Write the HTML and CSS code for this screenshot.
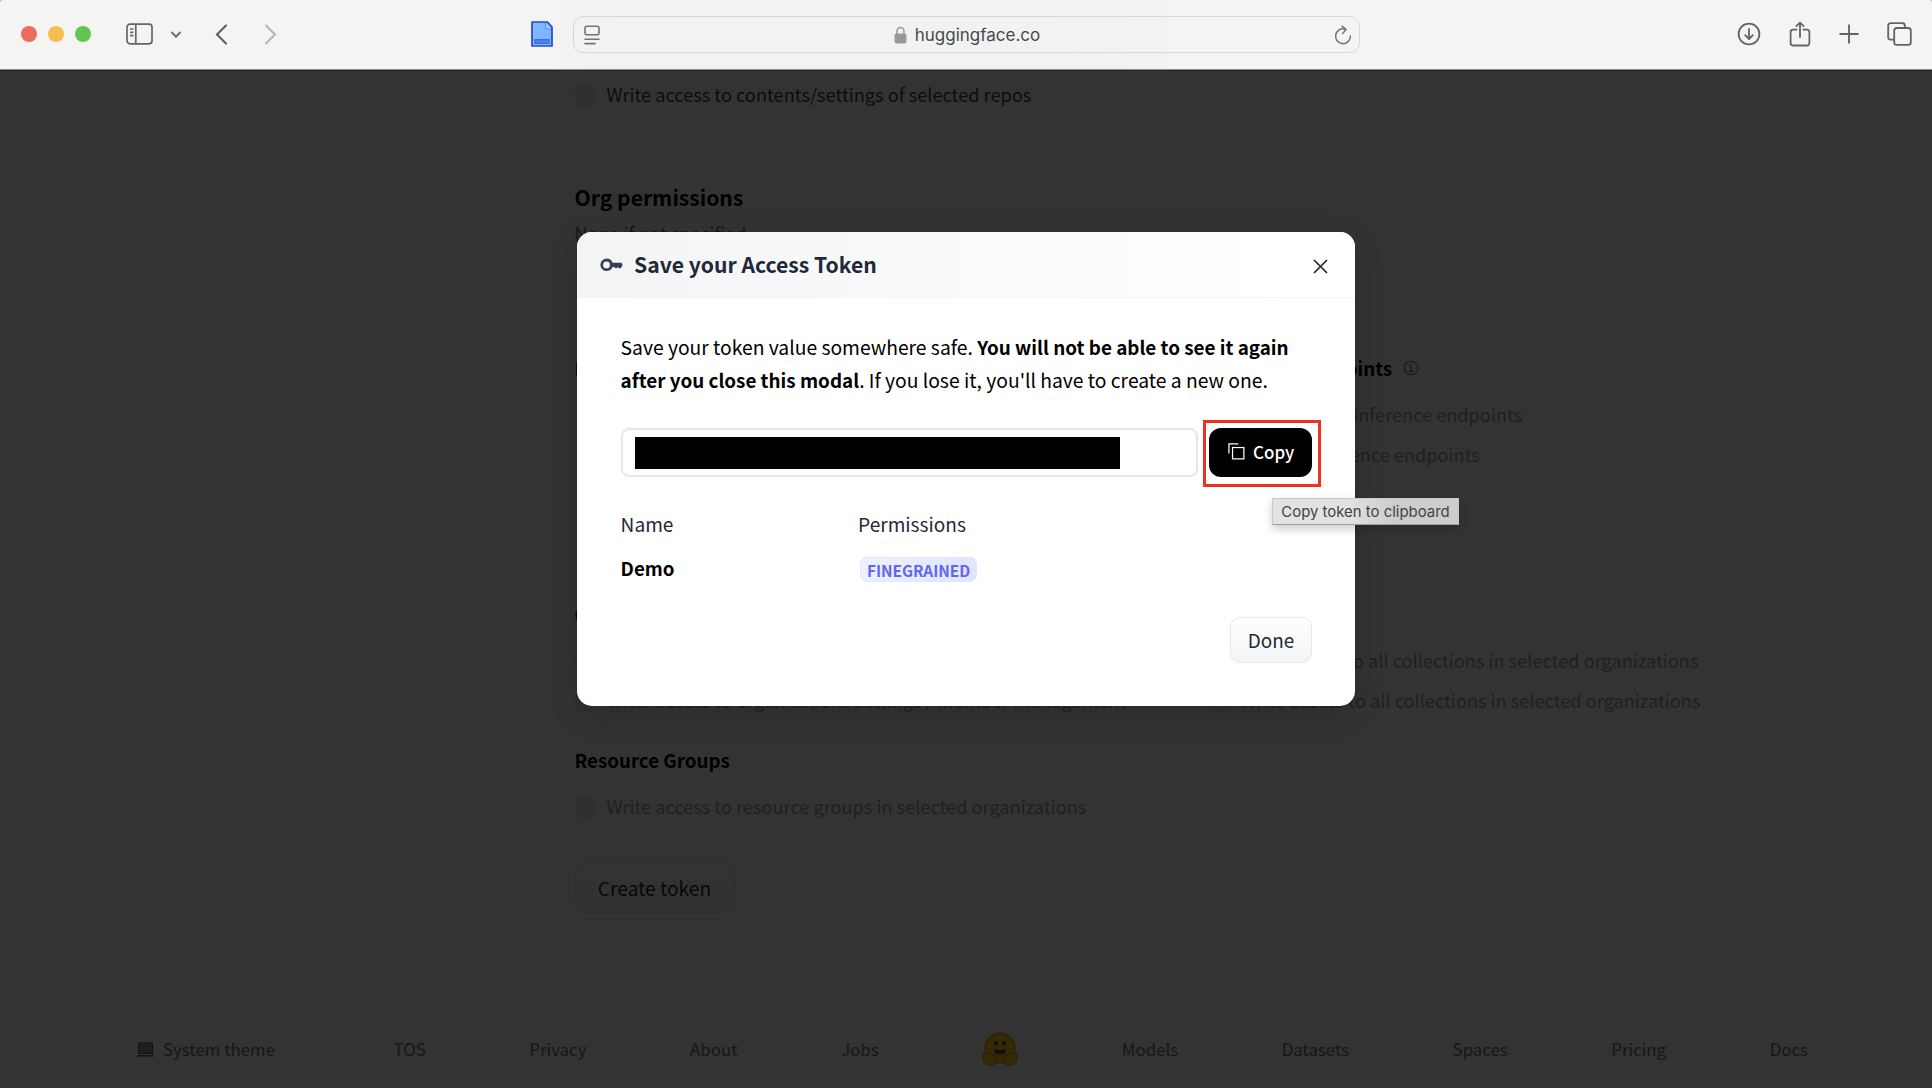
FILE: index.html
```html
<!DOCTYPE html>
<html lang="en">
<head>
<meta charset="utf-8">
<title>Access Tokens</title>
<link rel="stylesheet" href="styles.css">
</head>
<body>
<div class="browser">
  <header class="toolbar">
    <div class="toolbar-left">
      <div class="lights"><span class="light red"></span><span class="light yellow"></span><span class="light green"></span></div>
      <svg class="i-sidebar" width="27" height="22" viewBox="0 0 27 22" fill="none" stroke="#666664" stroke-width="1.7"><rect x="1" y="1.2" width="25" height="19.6" rx="3"/><path d="M9.8 1v20M4 6h3.4M4 9.3h3.4M4 12.6h3.4"/></svg>
      <span class="divider"></span>
      <svg class="i-down" width="12" height="8" viewBox="0 0 12 8" fill="none" stroke="#747472" stroke-width="2" stroke-linecap="round"><path d="M2 1.5l4 4.2 4-4.2"/></svg>
      <svg class="i-back" width="13" height="21" viewBox="0 0 13 21" fill="none" stroke="#5e5e5c" stroke-width="2.1" stroke-linecap="round"><path d="M11 1.6L2 10.5l9 8.9"/></svg>
      <svg class="i-forward" width="13" height="21" viewBox="0 0 13 21" fill="none" stroke="#b5b5b3" stroke-width="2.1" stroke-linecap="round"><path d="M2 1.6l9 8.9-9 8.9"/></svg>
    </div>
    <div class="toolbar-mid">
      <svg class="i-doc" width="22" height="26" viewBox="0 0 22 26"><defs><linearGradient id="doc" x1="0" y1="0" x2="1" y2="1"><stop offset="0" stop-color="#86b8fb"/><stop offset="1" stop-color="#7cb4ff"/></linearGradient></defs><path d="M1 1h15.5l4.5 5v19H1z" fill="url(#doc)" stroke="#1f4bd0" stroke-width="1.7" stroke-linejoin="round"/><path d="M14.5 2v6h5.6" fill="#a9d0fb" stroke="#4c8bee" stroke-width="1"/><rect x="3.8" y="18.7" width="14.4" height="3.6" fill="#4a86ee" stroke="#2f62e4"/></svg>
      <div class="address">
        <svg width="16" height="20" viewBox="0 0 16 20" fill="none" stroke="#737371" stroke-width="1.6" stroke-linecap="round"><rect x="1" y="1.2" width="14" height="8.6" rx="2"/><path d="M1 14.2h14M1 18.6h10"/></svg>
        <div class="host"><svg width="13" height="18" viewBox="0 0 13 18"><path d="M3 8V5a3.5 3.5 0 0 1 7 0v3" fill="none" stroke="#999997" stroke-width="1.5"/><rect x=".5" y="7.5" width="12" height="10" rx="2" fill="#999997"/></svg><span>huggingface.co</span></div>
        <svg width="18" height="20" viewBox="0 0 18 20" fill="none" stroke="#747472" stroke-width="1.5" stroke-linecap="round" stroke-linejoin="round"><path d="M11.2 4.2A7.4 7.4 0 1 0 16.4 11M8 1.2l4.2 3.4L8.6 8.4"/></svg>
      </div>
    </div>
    <div class="toolbar-right">
      <svg width="24" height="24" viewBox="0 0 24 24" fill="none" stroke="#646462" stroke-width="1.8" stroke-linecap="round" stroke-linejoin="round"><circle cx="12" cy="12" r="10.4"/><path d="M12 6.8v10M8.2 13.2l3.8 3.8 3.8-3.8"/></svg>
      <svg width="22" height="26" viewBox="0 0 22 26" fill="none" stroke="#646462" stroke-width="1.8" stroke-linecap="round" stroke-linejoin="round"><path d="M7.6 8.7H4a2.4 2.4 0 0 0-2.4 2.4v11A2.4 2.4 0 0 0 4 24.5h14a2.4 2.4 0 0 0 2.4-2.4v-11A2.4 2.4 0 0 0 18 8.7h-3.6M11 16V1.8M7.4 5.2L11 1.6l3.6 3.6"/></svg>
      <svg width="20" height="20" viewBox="0 0 20 20" fill="none" stroke="#646462" stroke-width="1.9" stroke-linecap="round"><path d="M10 1.2v17.6M1.2 10h17.6"/></svg>
      <svg width="25" height="24" viewBox="0 0 25 24" fill="none" stroke="#646462" stroke-width="1.8" stroke-linejoin="round"><rect x="7.2" y="6" width="16.6" height="16.8" rx="2.6"/><path d="M7 17.6H3.6A2.4 2.4 0 0 1 1.2 15.2V3.6a2.4 2.4 0 0 1 2.4-2.4h11.8a2.4 2.4 0 0 1 2.4 2.4V6"/></svg>
    </div>
  </header>

  <div class="viewport">
    <main class="form">
      <div class="row strong"><span class="box"></span><span>Write access to contents/settings of selected repos</span></div>
      <hr>
      <h2>Org permissions</h2>
      <p class="sub">None if not specified</p>
      <div class="groups first">
        <section><h3>Inference</h3></section>
        <section>
          <h3>Inference endpoints <svg width="16" height="16" viewBox="0 0 16 16" fill="none" stroke="#6b7280" stroke-width="1.1"><circle cx="8" cy="8" r="6.8"/><path d="M6.2 6.8h2v4.6M5.8 11.4h4.6M8 4v1.4"/></svg></h3>
          <div class="row"><span class="box"></span>Make calls to inference endpoints</div>
          <div class="row"><span class="box"></span>Manage inference endpoints</div>
        </section>
      </div>
      <div class="groups second">
        <section>
          <h3>Org settings</h3>
          <div class="row"><span class="box"></span>Read access to organizations settings</div>
          <div class="row"><span class="box"></span>Write access to organizations settings / member management</div>
        </section>
        <section>
          <h3>Collections</h3>
          <div class="row"><span class="box"></span>Read access to all collections in selected organizations</div>
          <div class="row"><span class="box"></span>Write access to all collections in selected organizations</div>
        </section>
      </div>
      <section class="third">
        <h3>Resource Groups</h3>
        <div class="row"><span class="box"></span>Write access to resource groups in selected organizations</div>
      </section>
      <button class="create">Create token</button>
    </main>

    <footer class="footer">
      <span class="theme"><svg width="17" height="16" viewBox="0 0 17 16"><rect x="1.5" y="2" width="14" height="10.5" rx="1" fill="#8b98a5" stroke="#4b5563" stroke-width="1.2"/><path d="M0 14.8h17" stroke="#4b5563" stroke-width="1.5"/></svg><span>System theme</span></span>
      <span>TOS</span><span>Privacy</span><span>About</span><span>Jobs</span>
      <svg class="logo" width="36" height="34" viewBox="0 0 36 34"><circle cx="18" cy="16" r="14.8" fill="#ffd21e" stroke="#ff9d0b" stroke-width="1.5"/><path d="M13 9.5c1.5-1 3 .5 3 2.5 0 1-1 .6-1.6.9-.7.3-1.4.8-1.9 0-.5-1-.5-2.6.5-3.4zM23 9.5c-1.5-1-3 .5-3 2.5 0 1 1 .6 1.6.9.7.3 1.4.8 1.9 0 .5-1 .5-2.6-.5-3.4z" fill="#3a3b45"/><path d="M12.800 16.500c3 2 7.400 2 10.400 0 .5 4-2 6-5.200 6s-5.700-2-5.200-6z" fill="#3a3b45"/><path d="M15 21.400c1-2.500 5-2.500 6 0-1.500 1.300-4.500 1.300-6 0z" fill="#f94040"/><path d="M2 20.500c1.500-1.500 3 .5 4.500 2.500-.5-2.500 2-3.500 3-1l1.500 2c.5-3 3.500-2 3 .5l.8 2.500c.8 3-1.800 6-6 6C4 33 .5 31 1.200 27c-.7-2-.7-5 .8-6.500zM34 20.500c-1.500-1.500-3 .5-4.500 2.500.5-2.500-2-3.500-3-1L25 24c-.5-3-3.500-2-3 .5l-.8 2.500c-.8 3 1.800 6 6 6 4.800 0 8.300-2 7.600-6 .7-2 .7-5-.8-6.500z" fill="#ffd21e" stroke="#ff9d0b" stroke-width="1.400"/></svg>
      <span>Models</span><span>Datasets</span><span>Spaces</span><span>Pricing</span><span>Docs</span>
    </footer>

    <div class="backdrop"></div>

    <div class="modal">
      <div class="modal-head">
        <svg width="23" height="14" viewBox="0 0 23 14"><path fill-rule="evenodd" d="M6.500.5a6.300 6.300 0 0 1 6 4.200H21.600L22.600 7 20.800 10.300H18.800L17.800 8.900 16.600 10.300H15.400L14.200 9H12.600A6.300 6.300 0 1 1 6.500.5zm0 3a3.400 3.400 0 1 0 0 6.800 3.400 3.400 0 0 0 0-6.800z" fill="#374151"/></svg>
        <h1>Save your Access Token</h1>
        <svg class="close" width="15" height="15" viewBox="0 0 15 15" stroke="#1f2937" stroke-width="1.700"><path d="M1 1l13 13M14 1L1 14"/></svg>
      </div>
      <div class="modal-body">
        <p class="note">Save your token value somewhere safe. <b>You will not be able to see it again<br>after you close this modal</b>. If you lose it, you'll have to create a new one.</p>
        <div class="token">
          <div class="field"><span class="redacted"></span></div>
          <div class="highlight"><button class="copy"><svg width="17" height="17" viewBox="0 0 18 18" fill="none" stroke="#fff" stroke-width="1.300"><rect x="4.800" y="4.800" width="12" height="12"/><path d="M1 11V1h10"/></svg><span>Copy</span></button></div>
        </div>
        <div class="facts">
          <span>Name</span><span>Permissions</span>
          <b>Demo</b><span class="badge">FINEGRAINED</span>
        </div>
        <div class="actions"><button class="done">Done</button></div>
      </div>
    </div>
    <div class="tooltip">Copy token to clipboard</div>
  </div>
</div>
</body>
</html>
```
FILE: styles.css
```css
* { box-sizing: border-box; }
body { margin: 0; background: #b9b9b7; font-family: "Noto Sans CJK SC", "Noto Sans", sans-serif; font-size: 19px; color: #1f2937; }
svg { display: block; flex: none; }
button { font: inherit; color: inherit; padding: 0; }
h1, h2, h3, p { margin: 0; }

.browser { display: flex; flex-direction: column; width: 1932px; height: 1088px; overflow: hidden; border-radius: 4px 4px 0 0; background: #fff; }
.toolbar { display: flex; align-items: center; justify-content: space-between; height: 71px; padding: 0 20px 2px 21px; background: linear-gradient(90deg, #f4f4f2 530px, #f1f2f2 620px, #f1f2f2 1050px, #f4f4f2 1220px); border-bottom: 1px solid #222; box-shadow: inset 0 -1px #8d8d8c; }
.toolbar-left { display: flex; align-items: center; width: 256px; }
.lights { display: flex; gap: 11px; }
.light { width: 16px; height: 16px; border-radius: 50%; }
.red { background: #ed6a5e; }
.yellow { background: #f5bf4f; }
.green { background: #61c554; }
.i-sidebar { margin-left: 35px; }
.divider { width: 1px; height: 27px; margin-left: 9px; background: #e0e0de; }
.i-down { margin: 2px 0 0 8px; }
.i-back { margin-left: 33px; }
.i-forward { margin-left: 36px; }
.toolbar-mid { display: flex; align-items: center; gap: 20px; width: 829px; margin-left: 254px; }
.address { flex: 1; display: flex; align-items: center; justify-content: space-between; height: 37px; padding: 1px 7px 0 10px; border: 1.5px solid #d6d7d6; border-radius: 10px; }
.host { display: flex; align-items: center; gap: 8px; font: 17px/24px Inter, sans-serif; color: #494949; }
.toolbar-right { display: flex; align-items: center; justify-content: space-between; width: 175px; margin-left: auto; }

.viewport { position: relative; flex: 1; display: flex; flex-direction: column; background: #fff; }
.form { display: flex; flex-direction: column; align-items: stretch; width: 1787px; height: 940px; padding: 3px 0 0 574.5px; }
.row { display: flex; align-items: center; gap: 11px; height: 40.5px; font-size: 18.19px; color: #9ba0a8; white-space: nowrap; }
.row.strong { color: #374151; }
.box { flex: none; width: 21px; height: 21px; margin-top: 3px; border-radius: 5px; background: #e8e8ea; }
.row:not(.strong) .box { background: #f1f1f2; }
hr { width: 100%; height: 1px; margin: 30px 0 33px; border: 0; background: #f3f4f6; }
h2 { height: 36px; font-size: 21.1px; line-height: 36px; font-weight: 700; color: #000; }
h3 { display: flex; align-items: center; gap: 11px; height: 36px; margin-bottom: 8px; font-size: 18.75px; font-weight: 700; color: #000; }
.sub { font-size: 18.05px; line-height: 36px; color: #6b7280; }
.groups { display: grid; grid-template-columns: 633px 1fr; }
.groups > section:last-child .row { padding-left: 1px; }
.first { margin-top: 99px; }
.second { margin-top: 121px; }
.third { margin-top: 21px; }
.create { align-self: flex-start; width: 160px; height: 51px; margin-top: 36px; border: 1px solid #e5e7eb; border-radius: 12px; background: linear-gradient(#fff, #f5f6f7); font-size: 19.2px; }

.footer { flex: 1; display: flex; align-items: center; justify-content: space-between; padding: 0 124px 2px; border-top: 1px solid #eceef0; color: #6b7280; font-size: 16.85px; }
.footer > span:not(.theme), .theme span { margin-top: -2px; }
.theme { display: flex; align-items: center; gap: 9px; width: 166px; height: 41px; padding-left: 12px; border: 1px solid #f3f4f6; border-radius: 21px; }

.backdrop { position: absolute; inset: 0; background: rgba(0, 0, 0, .8); }
.modal { position: absolute; left: 577px; top: 161px; width: 778px; height: 474px; overflow: hidden; border-radius: 15px; background: #fff; box-shadow: 0 8px 30px rgba(0, 0, 0, .15); color: #000; }
.modal-head { display: flex; align-items: center; height: 66px; padding: 0 27px 0 23px; border-bottom: 1px solid #f3f4f6; background: linear-gradient(90deg, #f3f4f6, #fff 90%); }
h1 { margin: -2px 0 0 11px; font-size: 21.15px; line-height: 36px; font-weight: 600; color: #1f2937; }
.close { margin: 3px 0 0 auto; }
.modal-body { padding: 33px 43px 0 43.6px; }
.note { font-size: 19.3px; line-height: 32.6px; white-space: nowrap; }
.note b { font-size: 18.85px; }
.token { display: flex; align-items: flex-start; gap: 5px; margin: 23.8px -9px 0 0; }
.field { display: flex; align-items: center; width: 577.4px; height: 49px; margin-top: 8px; padding: 1px 0 0 12px; border: 2px solid #e5e7eb; border-radius: 8px; }
.redacted { width: 485px; height: 32px; background: #000; }
.highlight { width: 118px; height: 67px; padding: 5px 3px; border: 3px solid #ed3224; }
.copy { display: flex; align-items: center; gap: 8px; width: 103px; height: 49px; padding: 0 0 1px 19px; border: 0; border-radius: 12px; background: #000; color: #fff; font-size: 17px; font-weight: 500; }
.facts { display: grid; grid-template-columns: 237.5px 1fr; grid-auto-rows: 43px; align-items: center; margin-top: 15.7px; }
.facts > span:not(.badge) { color: #1f2937; font-size: 19.1px; }
.facts b { font-size: 18.7px; }
.badge { display: flex; align-items: center; justify-content: center; width: 117px; height: 25px; margin: 5px 0 0 2px; border: 1px solid #e0e7ff; border-radius: 7px; background: linear-gradient(120deg, #eef2ff, #e0e4fd); color: #6366f1; font-size: 15.4px; font-weight: 600; }
.actions { display: flex; justify-content: flex-end; margin-top: 28px; }
.done { width: 82px; height: 46px; border: 1.5px solid #e5e7eb; border-radius: 10px; background: linear-gradient(#fff, #f3f4f6); color: #1f2937; font-size: 18.9px; }
.tooltip { position: absolute; left: 1272px; top: 427px; width: 187px; height: 27px; border: 1px solid #c9c9c8; border-bottom-color: #a0a0a0; background: linear-gradient(90deg, #e2e2e1 40%, #cdcdcc 65%); box-shadow: 0 4px 10px rgba(0, 0, 0, .2); font: 14.93px/26px Inter, sans-serif; color: #444; text-align: center; }
```
